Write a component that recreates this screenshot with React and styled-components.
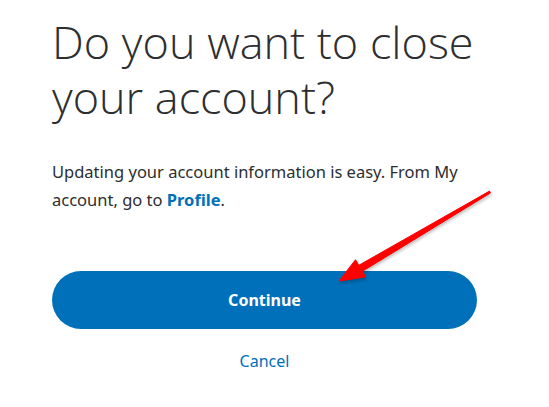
import React from "react";
import styled, { createGlobalStyle } from "styled-components";

const Global = createGlobalStyle`
  html, body { margin: 0; padding: 0; background: #ffffff; }
  body { width: 549px; height: 407px; overflow: hidden; }
`;

const Page = styled.div`
  position: relative;
  width: 549px;
  height: 407px;
  background: #fff;
`;

const Panel = styled.main`
  display: flex;
  flex-direction: column;
  width: 425px;
  padding: 14px 0 0 52px;
`;

const Heading = styled.h1`
  margin: 0;
  font-family: "Open Sans", "Noto Sans", sans-serif;
  font-weight: 300;
  font-size: 45px;
  line-height: 55px;
  color: #2c2e2f;
`;

const Text = styled.p`
  margin: 34px 0 0;
  font-family: "Noto Sans", "Open Sans", sans-serif;
  font-size: 16.5px;
  line-height: 28px;
  color: #2c2e2f;
`;

const Link = styled.a`
  color: #0070ba;
  font-weight: 700;
  text-decoration: none;
`;

const Actions = styled.div`
  display: flex;
  flex-direction: column;
  align-items: center;
  margin-top: 57px;
  gap: 21px;
`;

const Primary = styled.button`
  width: 425px;
  height: 58px;
  border: 0;
  border-radius: 29px;
  background: #0070ba;
  color: #fff;
  font-family: "Noto Sans", "Open Sans", sans-serif;
  font-weight: 700;
  font-size: 16px;
  cursor: pointer;
`;

const Secondary = styled.a`
  font-family: "Noto Sans", "Open Sans", sans-serif;
  font-size: 16px;
  color: #0070ba;
  text-decoration: none;
`;

const Arrow = styled.svg`
  position: absolute;
  left: 0;
  top: 0;
  width: 549px;
  height: 407px;
  pointer-events: none;
  filter: drop-shadow(1px 2px 1.5px rgba(0, 0, 0, 0.25));
`;

export default function App() {
  return (
    <Page>
      <Global />
      <Panel>
        <Heading>Do you want to close your account?</Heading>
        <Text>
          Updating your account information is easy. From My account, go to{" "}
          <Link href="#">Profile</Link>.
        </Text>
        <Actions>
          <Primary>Continue</Primary>
          <Secondary href="#">Cancel</Secondary>
        </Actions>
      </Panel>
      <Arrow viewBox="0 0 549 407">
        <polygon
          points="489.5,191.1 358.8,265.3 355.5,259.7 339,281 365.7,276.9 362.4,271.3 490.5,192.9"
          fill="#ff0000"
          stroke="#ff0000"
          strokeWidth="1"
          strokeLinejoin="round"
        />
      </Arrow>
    </Page>
  );
}
